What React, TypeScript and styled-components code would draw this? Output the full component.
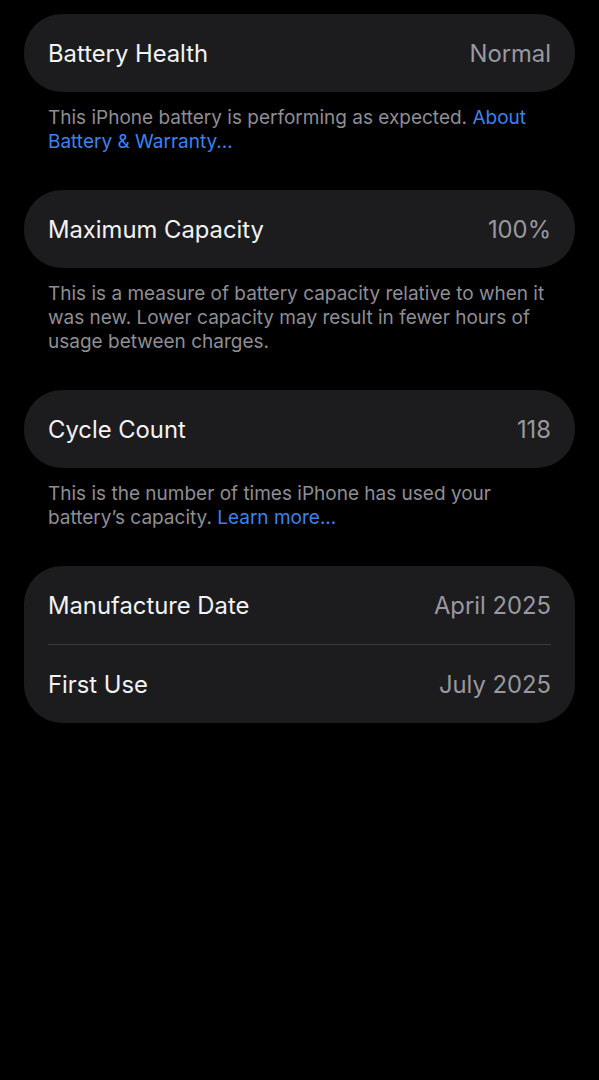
import React from "react";
import styled, { createGlobalStyle } from "styled-components";

type Row = { label: string; value: string };

type Section = {
  rows: Row[];
  footer?: React.ReactNode;
};

const GlobalStyle = createGlobalStyle`
  html, body {
    margin: 0;
    background: #000;
  }
  body {
    font-family: Inter, "Noto Sans", "Liberation Sans", sans-serif;
    -webkit-font-smoothing: antialiased;
  }
`;

const Page = styled.div`
  min-height: 1080px;
  padding: 14px 24px 0;
  box-sizing: border-box;
  background: #000;
  display: flex;
  flex-direction: column;
`;

const Group = styled.section`
  display: flex;
  flex-direction: column;
`;

const Card = styled.div`
  background: #1c1c1e;
  border-radius: 38px;
  overflow: hidden;
`;

const RowLine = styled.div`
  height: 78px;
  padding: 0 24px;
  display: flex;
  align-items: center;
  justify-content: space-between;
  font-size: 23.8px;
`;

const Label = styled.span`
  color: #f2f2f5;
`;

const Value = styled.span`
  color: #98989e;
`;

const Divider = styled.div`
  height: 1px;
  margin: 0 24px;
  background: #3a3a3c;
`;

const Footer = styled.p`
  margin: 0;
  padding: 14px 24px 36px;
  font-size: 19px;
  line-height: 24px;
  color: #8e8e93;
  white-space: nowrap;
`;

const Link = styled.span`
  color: #3b82f0;
`;

const sections: Section[] = [
  {
    rows: [{ label: "Battery Health", value: "Normal" }],
    footer: (
      <>
        This iPhone battery is performing as expected.{" "}
        <Link>
          About
          <br />
          Battery &amp; Warranty...
        </Link>
      </>
    ),
  },
  {
    rows: [{ label: "Maximum Capacity", value: "100%" }],
    footer: (
      <>
        This is a measure of battery capacity relative to when it
        <br />
        was new. Lower capacity may result in fewer hours of
        <br />
        usage between charges.
      </>
    ),
  },
  {
    rows: [{ label: "Cycle Count", value: "118" }],
    footer: (
      <>
        This is the number of times iPhone has used your
        <br />
        battery’s capacity. <Link>Learn more...</Link>
      </>
    ),
  },
  {
    rows: [
      { label: "Manufacture Date", value: "April 2025" },
      { label: "First Use", value: "July 2025" },
    ],
  },
];

export default function App() {
  return (
    <>
      <GlobalStyle />
      <Page>
        {sections.map((section, i) => (
          <Group key={i}>
            <Card>
              {section.rows.map((row, j) => (
                <div key={row.label}>
                  {j > 0 && <Divider />}
                  <RowLine>
                    <Label>{row.label}</Label>
                    <Value>{row.value}</Value>
                  </RowLine>
                </div>
              ))}
            </Card>
            {section.footer && <Footer>{section.footer}</Footer>}
          </Group>
        ))}
      </Page>
    </>
  );
}
